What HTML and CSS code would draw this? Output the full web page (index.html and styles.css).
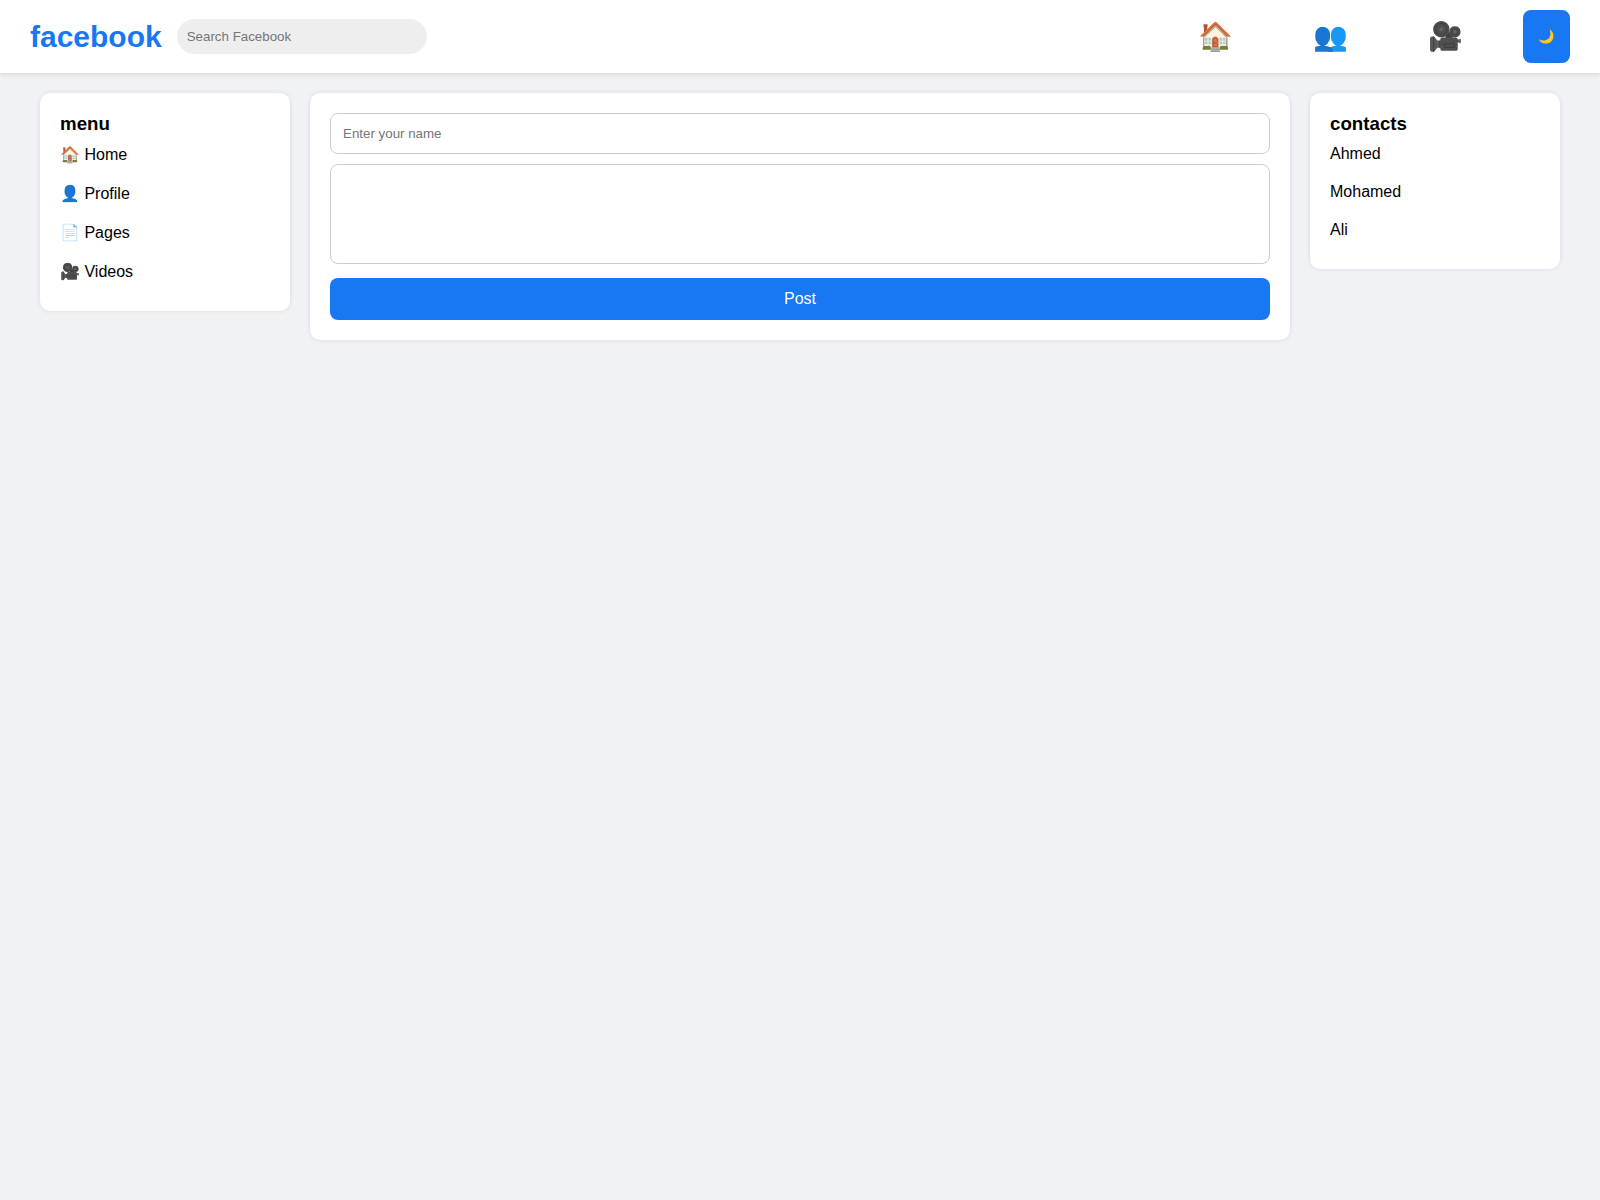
FILE: index.html
```html
<!DOCTYPE html>
<html lang="en">
<head>
  <meta charset="UTF-8">
  <meta name="viewport" content="width=device-width, initial-scale=1.0">
  <title>Facebook</title>
  <link rel="stylesheet" href="styles.css">
</head>
<body>
  <header class="navbar">
    <div class="left">
      <h1 class="logo">facebook</h1>
      <input type="text" class="search" placeholder="Search Facebook" aria-label="Search Facebook">
    </div>
    <nav class="icons">
      <a href="#" aria-label="Home">🏠</a>
      <a href="#" aria-label="Friends">👥</a>
      <a href="#" aria-label="Videos">🎥</a>
      <button id="themeBtn" aria-label="Dark mode">🌙</button>
    </nav>
  </header>

  <div class="container">
    <aside class="card sidebar">
      <h3>menu</h3>
      <ul>
        <li>🏠 Home</li>
        <li>👤 Profile</li>
        <li>📄 Pages</li>
        <li>🎥 Videos</li>
      </ul>
    </aside>

    <main class="feed">
      <form class="card post-form">
        <input type="text" id="name" placeholder="Enter your name" aria-label="Enter your name">
        <textarea id="postText" aria-label="Post text"></textarea>
        <button type="button" id="postBtn">Post</button>
      </form>
    </main>

    <aside class="card sidebar">
      <h3>contacts</h3>
      <ul>
        <li>Ahmed</li>
        <li>Mohamed</li>
        <li>Ali</li>
      </ul>
    </aside>
  </div>
</body>
</html>
```
FILE: styles.css
```css
* {
  margin: 0;
  padding: 0;
  box-sizing: border-box;
  font-family: "Liberation Sans", Arial, sans-serif;
}

body {
  background: #f0f2f5;
}

.navbar {
  display: flex;
  justify-content: space-between;
  align-items: center;
  padding: 10px 30px;
  background: white;
  box-shadow: 0 2px 5px rgba(0, 0, 0, 0.1);
}

.left {
  display: flex;
  align-items: center;
  gap: 15px;
}

.logo {
  color: #1877f2;
  font-size: 30px;
}

.search {
  width: 250px;
  padding: 10px;
  border: none;
  border-radius: 20px;
  background: #eee;
}

.icons {
  display: flex;
  gap: 40px;
}

.icons a {
  padding: 10px 20px;
  font-size: 28px;
  text-decoration: none;
}

button {
  padding: 12px 15px;
  border: none;
  border-radius: 8px;
  background: #1877f2;
  color: white;
  cursor: pointer;
}

.container {
  display: flex;
  align-items: flex-start;
  gap: 20px;
  padding: 20px 40px;
}

.card {
  padding: 20px;
  border-radius: 10px;
  background: white;
  box-shadow: 0 0 5px rgba(0, 0, 0, 0.1);
}

.sidebar {
  width: 250px;
}

.sidebar ul {
  list-style: none;
}

.sidebar li {
  padding: 10px 0;
}

.feed {
  flex: 1;
}

.post-form input,
.post-form textarea {
  width: 100%;
  padding: 12px;
  border: 1px solid #ccc;
  border-radius: 8px;
}

.post-form input {
  margin-bottom: 10px;
}

.post-form textarea {
  height: 100px;
  margin-bottom: 10px;
  resize: none;
}

.post-form button {
  width: 100%;
  font-size: 16px;
}
```
